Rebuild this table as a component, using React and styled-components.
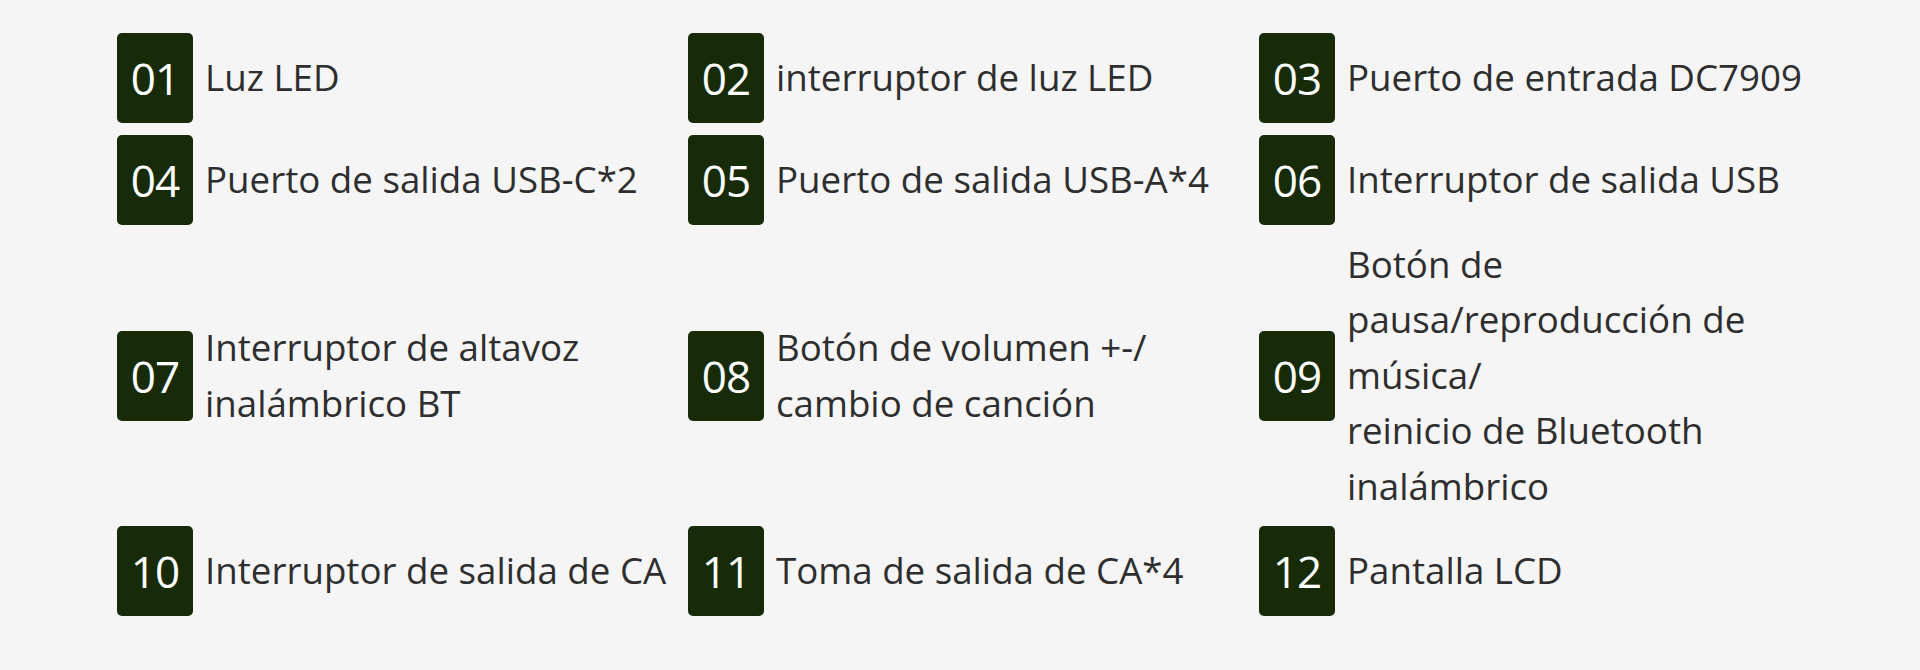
import React from "react";
import styled, { createGlobalStyle } from "styled-components";

const Global = createGlobalStyle`
  html, body { margin: 0; padding: 0; background: #f5f5f5; }
  body { font-family: "Open Sans", "Noto Sans", sans-serif; }
`;

const Page = styled.div`
  width: 1920px;
  min-height: 670px;
  box-sizing: border-box;
  padding: 33px 0 0 117px;
  background: #f5f5f5;
`;

const Grid = styled.div`
  display: grid;
  grid-template-columns: repeat(3, 571px);
  row-gap: 12px;
`;

const Item = styled.div`
  display: flex;
  align-items: center;
  gap: 12px;
  min-height: 90px;
`;

const Badge = styled.div`
  flex: 0 0 76px;
  height: 90px;
  border-radius: 5px;
  background: #172b08;
  color: #ffffff;
  display: flex;
  align-items: center;
  justify-content: center;
  font-size: 44px;
  letter-spacing: -1px;
  line-height: 1;
`;

const Label = styled.div`
  width: 483px;
  font-size: 36.7px;
  line-height: 55.4px;
  color: #2e2e2e;
`;

const items = [
  ["01", "Luz LED"],
  ["02", "interruptor de luz LED"],
  ["03", "Puerto de entrada DC7909"],
  ["04", "Puerto de salida USB-C*2"],
  ["05", "Puerto de salida USB-A*4"],
  ["06", "Interruptor de salida USB"],
  ["07", "Interruptor de altavoz inalámbrico BT"],
  ["08", "Botón de volumen +-/ cambio de canción"],
  ["09", ["Botón de pausa/reproducción de música/", "reinicio de Bluetooth inalámbrico"]],
  ["10", "Interruptor de salida de CA"],
  ["11", "Toma de salida de CA*4"],
  ["12", "Pantalla LCD"],
];

export default function App() {
  return (
    <Page>
      <Global />
      <Grid>
        {items.map(([n, t]) => (
          <Item key={n}>
            <Badge>{n}</Badge>
            <Label>
              {Array.isArray(t)
                ? t.map((line, i) => (
                    <React.Fragment key={i}>
                      {i > 0 && <br />}
                      {line}
                    </React.Fragment>
                  ))
                : t}
            </Label>
          </Item>
        ))}
      </Grid>
    </Page>
  );
}
